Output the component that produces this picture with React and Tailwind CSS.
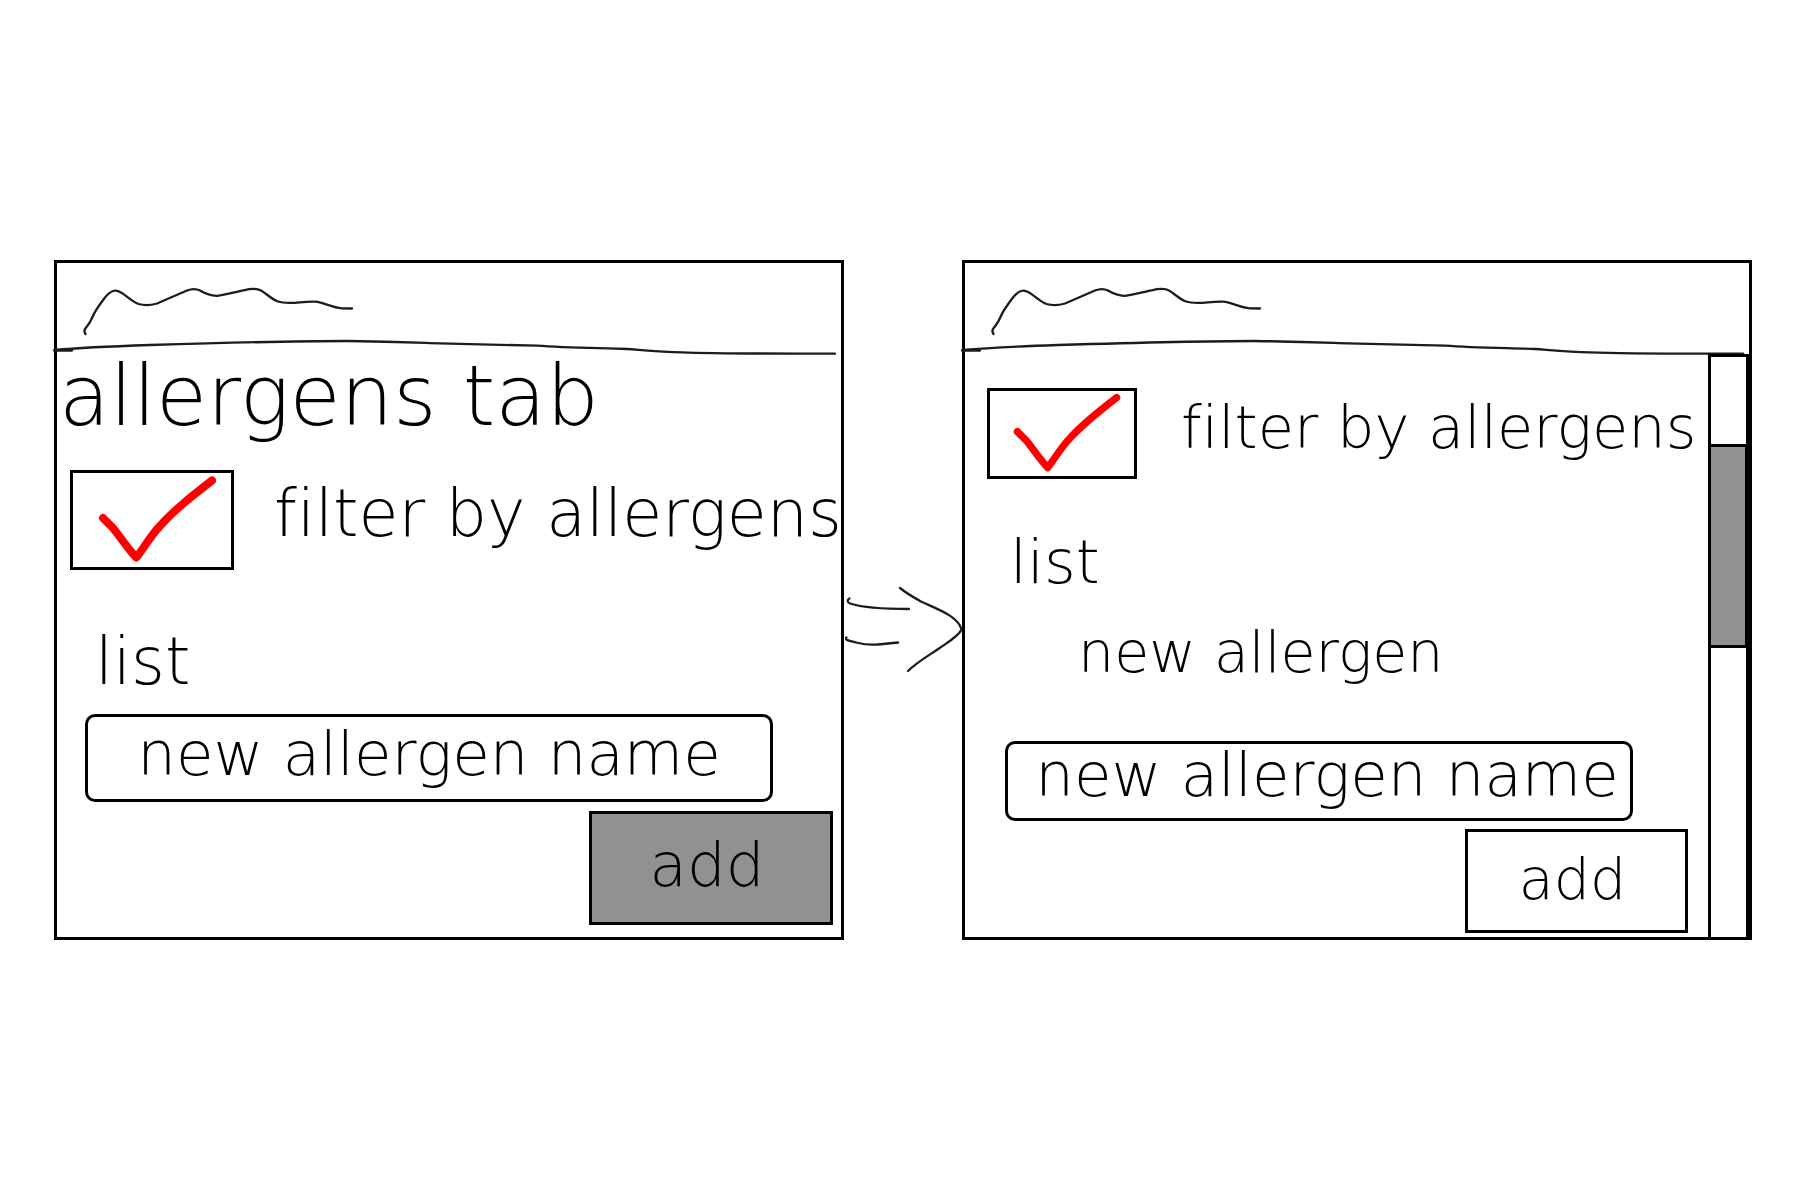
function HeaderSketch() {
  return (
    <svg
      viewBox="0 0 784 91"
      className="block h-auto w-full overflow-visible"
      fill="none"
      stroke="#1c1c1c"
      strokeWidth="2.3"
      strokeLinecap="round"
      strokeLinejoin="round"
      aria-hidden="true"
    >
      <path d="M28.5 71C27 69 27.300 66.500 29 64.500C32 60.500 33 60 35 55C38 47.500 43 41 48 34.500C54 27.500 58 25.800 64 29.500C70 33 75 38.500 81.500 41C87 42.500 93 42.500 100 40.500L130 27.500C135 25.500 139 25.500 143 27.500C149 31 154 33 160 32.800C168 32.300 178 29 186.500 27.300C192 26 199 24.500 204 27.500C210 31 215 36.500 221 38.500C232 42 245 38 258 38.700C268 39.500 274 44.500 285 45.300L295 45.500" />
      <path d="M-3 87.500H15" />
      <path d="M-2 87C25 84.500 55 83.300 93 82C160 80 230 78 290 78C340 78.700 365 79.800 383 80.300L480 82.700C510 85 545 85 570 86C590 87.500 605 89 625 89.300C660 90.700 700 90.500 778 90.700" />
    </svg>
  );
}

function TickBox({ id, className }) {
  return (
    <span className={`grid shrink-0 ${className}`}>
      <input
        id={id}
        type="checkbox"
        defaultChecked
        className="col-start-1 row-start-1 size-full appearance-none border-3 border-black bg-white"
      />
      <svg
        viewBox="0 0 164 100"
        className="pointer-events-none col-start-1 row-start-1 size-full"
        fill="none"
        stroke="#ff0000"
        strokeWidth="8"
        strokeLinecap="round"
        strokeLinejoin="round"
        aria-hidden="true"
      >
        <path d="M33 48L43 58C51 68 58 79 66.300 87.500C73 79 80 67 89 57C104 40 122 26 142 10.500" />
      </svg>
    </span>
  );
}

function Arrow() {
  return (
    <svg
      viewBox="0 0 118 100"
      className="mt-[60px] block w-full overflow-visible"
      fill="none"
      stroke="#1c1c1c"
      strokeWidth="2.3"
      strokeLinecap="round"
      strokeLinejoin="round"
      aria-hidden="true"
    >
      <path d="M5.500 18.500C3 19.500 3 22.500 6 23.500C20 28 40 29 65 29" />
      <path d="M2.500 57.500C0 60 6 61 12 62.500C20 64.500 28 65 34 64.500L54 62.500" />
      <path d="M56 8C62 13 69 17 77 21.500C93 29 114 36 117.500 49.500C115 56 104 62 95 68.500C84 76 73 82 64 91" />
    </svg>
  );
}

export default function App() {
  return (
    <main className="grid min-h-screen grid-cols-[minmax(0,1fr)_118px_minmax(0,1fr)] items-center bg-white pr-12 pl-[54px] font-['DejaVu_Sans',sans-serif] font-extralight whitespace-nowrap text-black [font-variant-ligatures:none]">
      <section className="border-3 border-black">
        <HeaderSketch />
        <form className="flex flex-col pb-3">
          <h1 className="pl-0.5 text-[83px] leading-[86px]">allergens tab</h1>
          <div className="mt-[30px] ml-[13px] flex items-start gap-10">
            <TickBox id="filter-before" className="h-[100px] w-[164px]" />
            <label htmlFor="filter-before" className="text-[65px] leading-[88px]">
              filter by allergens
            </label>
          </div>
          <h2 className="mt-[60px] ml-[38px] text-[65px] leading-[64px]">list</h2>
          <input
            type="text"
            aria-label="new allergen name"
            placeholder="new allergen name"
            className="mt-5 mr-[68px] ml-7 h-[88px] min-w-0 rounded-[10px] border-3 border-black pb-2 text-center text-[61px] placeholder-black"
          />
          <button
            type="button"
            className="mt-[9px] mr-2 h-[114px] w-[244px] self-end border-3 border-black bg-[#939091] pr-2 pb-2 text-[61px] leading-none"
          >
            add
          </button>
        </form>
      </section>

      <Arrow />

      <section className="border-3 border-black">
        <HeaderSketch />
        <div className="flex">
          <form className="flex min-w-0 flex-1 flex-col pb-1">
            <div className="mt-[34px] ml-[22px] flex items-start gap-11">
              <TickBox id="filter-after" className="h-[91px] w-[150px]" />
              <label htmlFor="filter-after" className="text-[59px] leading-[80px]">
                filter by allergens
              </label>
            </div>
            <h2 className="mt-[51px] ml-[45px] text-[61px] leading-[64px]">list</h2>
            <ul className="mt-[26px] ml-[113px] text-[57px] leading-[64px]">
              <li>new allergen</li>
            </ul>
            <input
              type="text"
              aria-label="new allergen name"
              placeholder="new allergen name"
              className="mt-[57px] mr-[75px] ml-10 h-20 min-w-0 rounded-[10px] border-3 border-black pb-3 pl-4 text-center text-[61px] placeholder-black"
            />
            <button
              type="button"
              className="mt-2 mr-5 h-[104px] w-[223px] self-end border-3 border-black bg-white pr-2 pb-1 text-[57px] leading-none"
            >
              add
            </button>
          </form>
          <div
            role="scrollbar"
            aria-label="allergens"
            aria-orientation="vertical"
            aria-valuenow={20}
            className="flex w-[41px] flex-col border-3 border-b-0 border-black bg-white"
          >
            <div className="mt-[87px] h-[204px] border-y-3 border-r border-black bg-[#939091]" />
          </div>
        </div>
      </section>
    </main>
  );
}
